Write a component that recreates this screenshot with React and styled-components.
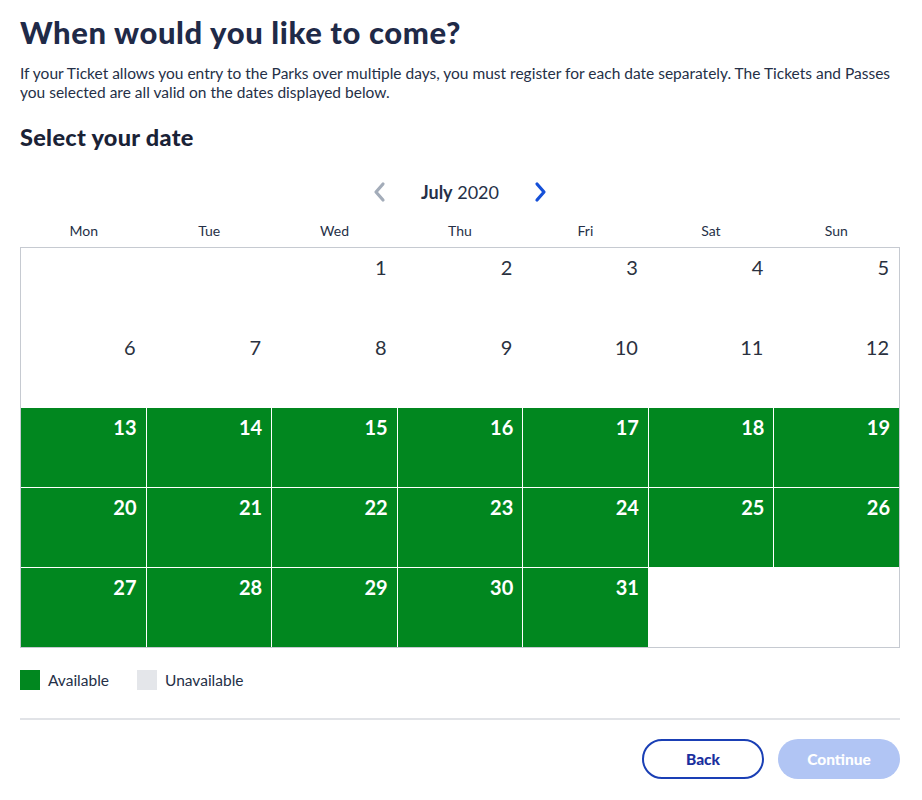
import React from 'react';
import styled, { createGlobalStyle } from 'styled-components';

const GlobalStyle = createGlobalStyle`
  body {
    margin: 0;
    background: #fff;
    font-family: Lato, "Open Sans", Arial, sans-serif;
    color: #253047;
  }
`;

const Page = styled.div`
  padding: 14px 22px 20px 20px;
`;

const Title = styled.h1`
  margin: 0;
  font-size: 31px;
  line-height: 37px;
  font-weight: 900;
  color: #1f2a48;
  letter-spacing: 0.6px;
`;

const Intro = styled.p`
  margin: 13px 0 0;
  font-size: 15.5px;
  line-height: 19px;
  color: #253047;
`;

const SubTitle = styled.h2`
  margin: 21px 0 0;
  font-size: 23.5px;
  line-height: 28px;
  font-weight: 900;
  color: #1a2236;
  letter-spacing: 0.3px;
`;

const MonthNav = styled.div`
  margin-top: 29px;
  display: flex;
  align-items: center;
  justify-content: center;
  gap: 32px;
  height: 24px;
`;

const Arrow = styled.button`
  border: 0;
  background: none;
  padding: 0;
  display: flex;
  cursor: pointer;
  color: ${p => (p.disabled ? '#a3acb9' : '#1550d8')};
`;

const MonthLabel = styled.div`
  font-size: 18px;
  color: #253047;
  b {
    font-weight: 700;
  }
`;

const Weekdays = styled.div`
  margin-top: 19px;
  display: grid;
  grid-template-columns: repeat(7, 1fr);
  padding: 0 1px;
`;

const Weekday = styled.div`
  text-align: center;
  font-size: 14px;
  line-height: 16px;
  color: #253047;
`;

const Grid = styled.div`
  margin-top: 8px;
  display: grid;
  grid-template-columns: repeat(7, 1fr);
  grid-auto-rows: 79px;
  gap: 1px;
  background: #fff;
  border: 1px solid #c6cad1;
`;

const Cell = styled.div`
  display: flex;
  justify-content: flex-end;
  align-items: flex-start;
  padding: 6px ${p => (p.$available ? '9px' : '10px')} 0 0;
  background: ${p => (p.$available ? '#01871f' : '#fff')};
  color: ${p => (p.$available ? '#fff' : '#2a3140')};
  font-size: 20px;
  font-weight: ${p => (p.$available ? 700 : 400)};
  line-height: 26px;
  cursor: ${p => (p.$available ? 'pointer' : 'default')};
`;

const Legend = styled.div`
  margin-top: 22px;
  display: flex;
  align-items: center;
  gap: 28px;
`;

const LegendItem = styled.div`
  display: flex;
  align-items: center;
  gap: 8px;
  font-size: 15.5px;
  color: #253047;
`;

const Swatch = styled.span`
  width: 20px;
  height: 20px;
  background: ${p => p.$color};
`;

const Divider = styled.hr`
  margin: 28px 0 0;
  border: 0;
  border-top: 2px solid #e1e3e7;
`;

const Actions = styled.div`
  margin-top: 19px;
  display: flex;
  justify-content: flex-end;
  gap: 14px;
`;

const Button = styled.button`
  width: 122px;
  height: 40px;
  border-radius: 20px;
  font-family: Lato, Arial, sans-serif;
  font-size: 15.5px;
  font-weight: 900;
  cursor: pointer;
  border: 2px solid ${p => (p.$primary ? 'transparent' : '#1a3fb5')};
  background: ${p => (p.$primary ? '#b1c5f4' : '#fff')};
  color: ${p => (p.$primary ? '#fff' : '#1a2f9e')};
`;

const Chevron = ({ dir }) => (
  <svg width="18" height="22" viewBox="0 0 18 22" fill="none">
    <path
      d={dir === 'left' ? 'M12 3 L5 11 L12 19' : 'M6 3 L13 11 L6 19'}
      stroke="currentColor"
      strokeWidth="3.2"
      strokeLinecap="round"
      strokeLinejoin="round"
    />
  </svg>
);

const weekdays = ['Mon', 'Tue', 'Wed', 'Thu', 'Fri', 'Sat', 'Sun'];

// July 2020 starts on a Wednesday
const cells = [null, null, ...Array.from({ length: 31 }, (_, i) => i + 1)];
while (cells.length < 35) cells.push(null);

const App = () => (
  <Page>
    <GlobalStyle />
    <Title>When would you like to come?</Title>
    <Intro>
      If your Ticket allows you entry to the Parks over multiple days, you must register for each date separately. The Tickets and Passes you selected are all valid on the dates displayed below.
    </Intro>
    <SubTitle>Select your date</SubTitle>

    <MonthNav>
      <Arrow disabled aria-label="Previous month"><Chevron dir="left" /></Arrow>
      <MonthLabel><b>July</b> 2020</MonthLabel>
      <Arrow aria-label="Next month"><Chevron dir="right" /></Arrow>
    </MonthNav>

    <Weekdays>
      {weekdays.map(d => <Weekday key={d}>{d}</Weekday>)}
    </Weekdays>

    <Grid>
      {cells.map((day, i) => (
        <Cell key={i} $available={day !== null && day >= 13}>
          {day}
        </Cell>
      ))}
    </Grid>

    <Legend>
      <LegendItem><Swatch $color="#01871f" />Available</LegendItem>
      <LegendItem><Swatch $color="#e4e6ea" />Unavailable</LegendItem>
    </Legend>

    <Divider />

    <Actions>
      <Button>Back</Button>
      <Button $primary disabled>Continue</Button>
    </Actions>
  </Page>
);

export default App;
